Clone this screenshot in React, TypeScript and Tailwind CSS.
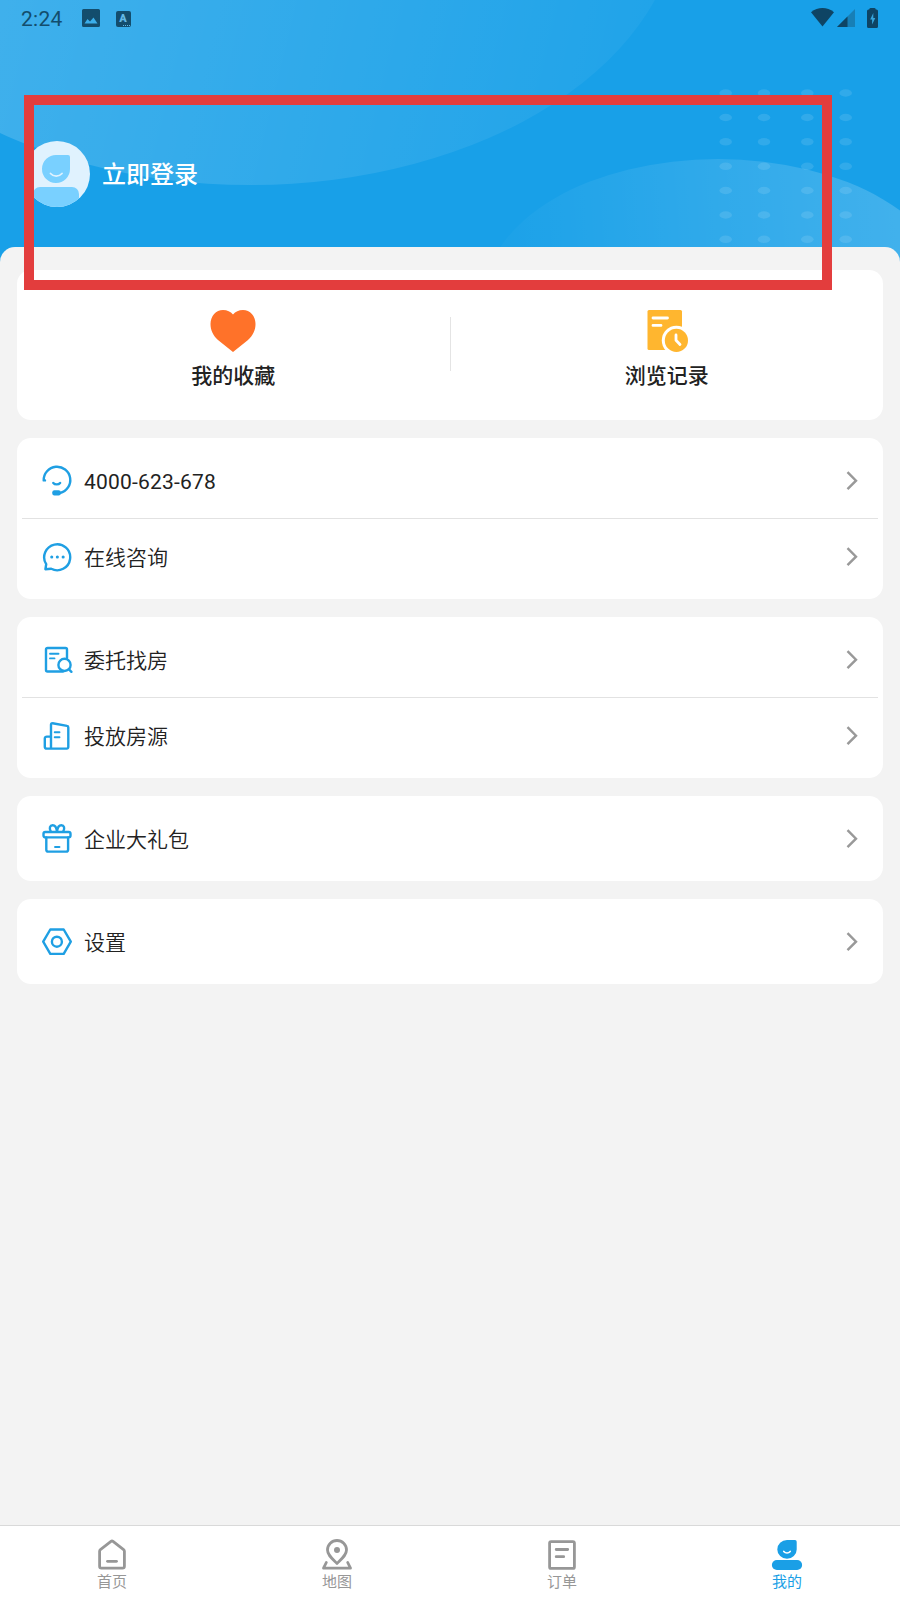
import React from "react";
import { clsx } from "clsx";

interface MenuItem {
  label: string;
  icon: React.ReactNode;
  isPhone?: boolean;
}

interface TabItem {
  label: string;
  icon: React.ReactNode;
  active?: boolean;
}

function LineIcon({ children }: { children: React.ReactNode }) {
  return (
    <svg
      viewBox="0 0 32 32"
      className="w-8 h-8 shrink-0"
      fill="none"
      stroke="#1f9fe3"
      strokeWidth="2.4"
      strokeLinecap="round"
      strokeLinejoin="round"
    >
      {children}
    </svg>
  );
}

function TabIcon({ children }: { children: React.ReactNode }) {
  return (
    <svg
      viewBox="0 0 32 32"
      className="w-8 h-8"
      fill="none"
      stroke="currentColor"
      strokeWidth="2.8"
      strokeLinecap="round"
      strokeLinejoin="round"
    >
      {children}
    </svg>
  );
}

const menuGroups: MenuItem[][] = [
  [
    {
      label: "4000-623-678",
      isPhone: true,
      icon: (
        <LineIcon>
          <path d="M4 15.400H2.700A13.300 13.300 0 1 1 19 28" />
          <path d="M12.300 17.900c1.600 2 5.200 2 6.800 0" />
          <rect x="11.300" y="25.200" width="8.400" height="5.200" rx="2" fill="#1f9fe3" stroke="none" />
        </LineIcon>
      ),
    },
    {
      label: "在线咨询",
      icon: (
        <LineIcon>
          <path d="M5.200 23.200A13 13 0 1 1 10.200 27.800L4.400 28.200Z" />
          <path d="M10.700 15.900h.1M16.300 15.900h.1M22.100 15.900h.1" strokeWidth="3" />
        </LineIcon>
      ),
    },
  ],
  [
    {
      label: "委托找房",
      icon: (
        <LineIcon>
          <path d="M26 14V5.500A1.500 1.500 0 0 0 24.500 4h-18A1.500 1.500 0 0 0 5 5.500V26a1.500 1.500 0 0 0 1.500 1.500H22" />
          <path d="M9 9.800h8.500M9 14.400h4.500" strokeWidth="1.900" />
          <circle cx="23.500" cy="20.900" r="6.100" />
          <path d="M28 25.400l2.400 2.400" />
        </LineIcon>
      ),
    },
    {
      label: "投放房源",
      icon: (
        <LineIcon>
          <path d="M10 28.600V4.600a1.300 1.300 0 0 1 1.600-1.300L26 5.900a1.500 1.500 0 0 1 1.300 1.500V27.100a1.500 1.500 0 0 1-1.500 1.500H5.700a1.900 1.900 0 0 1-1.900-1.900V18.600a2 2 0 0 1 2-2H10" />
          <path d="M13.700 12.300h4.800M13.700 17.300h4.800" strokeWidth="1.900" />
        </LineIcon>
      ),
    },
  ],
  [
    {
      label: "企业大礼包",
      icon: (
        <LineIcon>
          <rect x="2.500" y="9" width="27" height="5.400" rx="1.800" />
          <path d="M5.300 14.400V26.700a1.900 1.900 0 0 0 1.900 1.900h18a1.900 1.900 0 0 0 1.900-1.900V14.400" />
          <path d="M9.800 8.700C7.800 5.200 9 2.300 11.600 2.300C14.500 2.300 15.600 5.200 16 8.700C16.400 5.200 17.500 2.300 20.400 2.300C23 2.300 24.200 5.200 22.200 8.700" />
          <path d="M14 24h4.500" strokeWidth="1.900" />
        </LineIcon>
      ),
    },
  ],
  [
    {
      label: "设置",
      icon: (
        <LineIcon>
          <path d="M9.300 3.500h13.400l7.100 12.200-7.100 12.200H9.300L2.200 15.700Z" />
          <circle cx="15.900" cy="15.700" r="5" />
        </LineIcon>
      ),
    },
  ],
];

const tabs: TabItem[] = [
  {
    label: "首页",
    icon: (
      <TabIcon>
        <path d="M3.600 13.200a2 2 0 0 1 .8-1.600L15 3.400a1.600 1.600 0 0 1 2 0l10.600 8.200a2 2 0 0 1 .8 1.600v15a1.900 1.900 0 0 1-1.900 1.900h-21a1.900 1.900 0 0 1-1.900-1.900Z" />
        <path d="M11.500 23.300h9" />
      </TabIcon>
    ),
  },
  {
    label: "地图",
    icon: (
      <TabIcon>
        <path d="M16 25.400C11 20.500 6.500 17 6.500 12a9.500 9.500 0 0 1 19 0C25.500 17 21 20.500 16 25.400Z" />
        <circle cx="16" cy="12" r="3" fill="currentColor" stroke="none" />
        <path d="M5.300 24.500L2.500 30.200H29.500L26.700 24.500" />
      </TabIcon>
    ),
  },
  {
    label: "订单",
    icon: (
      <TabIcon>
        <rect x="3.600" y="3.600" width="24.800" height="26.800" rx="1.500" />
        <path d="M10.200 11.500h11.500M10.200 18.700h7.500" />
      </TabIcon>
    ),
  },
  {
    label: "我的",
    active: true,
    icon: (
      <TabIcon>
        <path
          d="M16 2H24a1.700 1.700 0 0 1 1.700 1.700V11.400A9.700 9.400 0 1 1 16 2Z"
          fill="currentColor"
          stroke="none"
        />
        <path d="M12.800 13.500c1.700 2 4.700 2 6.400 0" stroke="white" strokeWidth="1.700" />
        <rect x="0.900" y="22" width="30.200" height="10" rx="5" fill="currentColor" stroke="none" />
      </TabIcon>
    ),
  },
];

const dotColumns = [725.7, 764, 807.3, 845.7];
const dotRows = [93, 117.5, 141.8, 166.3, 190.5, 215, 239.3];

function HeaderArt() {
  return (
    <svg className="absolute inset-0 w-full h-full" viewBox="0 0 900 264">
      <defs>
        <linearGradient id="glowLeft" gradientUnits="userSpaceOnUse" x1="0" y1="0" x2="660" y2="160">
          <stop offset="0" stopColor="#fff" stopOpacity="0.17" />
          <stop offset="1" stopColor="#fff" stopOpacity="0.03" />
        </linearGradient>
        <linearGradient id="glowRight" gradientUnits="userSpaceOnUse" x1="510" y1="240" x2="900" y2="210">
          <stop offset="0" stopColor="#fff" stopOpacity="0.02" />
          <stop offset="1" stopColor="#fff" stopOpacity="0.18" />
        </linearGradient>
      </defs>
      <ellipse cx="250" cy="-94" rx="430" ry="279" fill="url(#glowLeft)" />
      <ellipse cx="718" cy="296" rx="233" ry="137" fill="url(#glowRight)" />
      {dotRows.map((y) =>
        dotColumns.map((x) => (
          <ellipse key={`${x}-${y}`} cx={x} cy={y} rx="6.300" ry="3.700" fill="#fff" fillOpacity="0.11" />
        ))
      )}
    </svg>
  );
}

function StatusBar() {
  return (
    <div className="relative flex h-9 items-center pl-[21px] pr-[22px] text-[#134d6d]">
      <span className="mt-[3px] w-[60.5px] font-[Roboto] text-[21px] font-[450] leading-none tracking-[0.3px]">2:24</span>
      <svg viewBox="0 0 18 18" className="w-[18px] h-[18px]">
        <path
          fill="currentColor"
          fillRule="evenodd"
          d="M1.500 0h15A1.500 1.500 0 0 1 18 1.500v15a1.500 1.500 0 0 1-1.500 1.500h-15A1.500 1.500 0 0 1 0 16.500v-15A1.500 1.500 0 0 1 1.500 0ZM2.500 14.500h13L11.500 8.500 8 12.500 5.500 10Z"
        />
      </svg>
      <span className="relative ml-4 mt-px flex h-4 w-[15px] items-center justify-center rounded-[2px] bg-[#134d6d] font-[Roboto] text-[11px] font-black leading-none text-[#63b9e6]">
        A
        <span className="absolute bottom-px right-px w-[7px] border-b border-dotted border-[#63b9e6]" />
      </span>
      <div className="-mt-px ml-auto flex items-center">
        <svg viewBox="0 0 23 19" className="w-[23px] h-[19px]">
          <path d="M0 4.200C7 -1.400 16 -1.400 23 4.200L11.500 18.500Z" fill="#0e4464" />
        </svg>
        <svg viewBox="0 0 18 18" className="ml-[3px] w-[18px] h-[18px]">
          <path d="M18 0V18H0Z" fill="#177fb6" />
          <path d="M10.500 7.500V18H0Z" fill="#0e4464" />
        </svg>
        <svg viewBox="0 0 11 20" className="ml-3 w-[11px] h-5">
          <path d="M3.500 0h4a1.500 1.500 0 0 1 1.300 1.500h.7A1.500 1.500 0 0 1 11 3v15.500A1.500 1.500 0 0 1 9.500 20h-8A1.500 1.500 0 0 1 0 18.500V3a1.500 1.500 0 0 1 1.500-1.500h.7A1.500 1.500 0 0 1 3.500 0Z" fill="#0e4464" />
          <path d="M6.300 5L3.200 11.500h1.900v5l3.200-6.500H6.300Z" fill="#36a5dd" />
        </svg>
      </div>
    </div>
  );
}

function Avatar() {
  return (
    <svg viewBox="0 0 66 66" className="w-[66px] h-[66px]">
      <defs>
        <clipPath id="avatarClip">
          <circle cx="33" cy="33" r="33" />
        </clipPath>
      </defs>
      <g clipPath="url(#avatarClip)">
        <rect width="66" height="66" fill="#e0f2fe" />
        <path d="M32.500 14H44a2 2 0 0 1 2 2v12a14 14 0 1 1-13.500-14Z" fill="#79d0ff" />
        <path d="M26.500 32.500c3 3.400 8.500 3.400 11.500 0" fill="none" stroke="#e0f2fe" strokeWidth="1.800" strokeLinecap="round" />
        <path d="M9 66V53a7 7 0 0 1 7-7h32a7 7 0 0 1 7 7v13Z" fill="#79d0ff" />
      </g>
    </svg>
  );
}

function HeartIcon() {
  return (
    <svg viewBox="0 0 46 42" className="w-[46px] h-[42px]">
      <path
        d="M23 42L8 30C3 25.500.5 20 .5 14C.5 6 6 0 13 0C17.300 0 20.500 1.500 23 4.500C25.500 1.500 28.700 0 33 0C40 0 45.500 6 45.500 14C45.500 20 43 25.500 38 30Z"
        fill="#ff7229"
      />
    </svg>
  );
}

function HistoryIcon() {
  return (
    <svg viewBox="0 0 42 42" className="ml-[3px] w-[42px] h-[42px]" fill="none" strokeLinecap="round">
      <rect x="0.500" y="0" width="34.500" height="40" rx="1.500" fill="#ffb62f" />
      <path d="M6 8h14.500M6 15.400h8" stroke="white" strokeWidth="2.800" />
      <circle cx="29.400" cy="30.400" r="14.600" fill="white" />
      <circle cx="29.400" cy="30.400" r="11.600" fill="#ffb62f" />
      <path d="M29 25v5.300l4 4.200" stroke="white" strokeWidth="2.800" strokeLinejoin="round" />
    </svg>
  );
}

function MenuRow({ item }: { item: MenuItem }) {
  return (
    <button className="flex h-[76px] w-full items-center pl-6 pr-[25px] text-left">
      {item.icon}
      <span
        className={clsx(
          "ml-[11px] mt-1 text-[21px] leading-none text-[#222]",
          item.isPhone ? "font-normal tracking-[0.2px]" : "font-[350]"
        )}
      >
        {item.label}
      </span>
      <svg viewBox="0 0 12 20" className="ml-auto w-3 h-5" fill="none" stroke="#999" strokeWidth="2.400">
        <path d="M1.500 1.200L10 9.700L1.500 18.200" />
      </svg>
    </button>
  );
}

export default function App() {
  return (
    <div className="relative flex h-[1600px] w-[900px] flex-col overflow-hidden bg-[#f3f3f3] font-[Roboto,'Noto_Sans_CJK_SC',sans-serif]">
      {/* Header */}
      <header className="relative h-[264px] shrink-0 bg-[#18a0e8]">
        <HeaderArt />
        <StatusBar />
        <div className="relative mt-[105px] flex items-center pl-6">
          <Avatar />
          <span className="ml-3 mt-0.5 text-[24px] font-medium leading-none text-white">立即登录</span>
        </div>
      </header>

      {/* Sheet with the cards */}
      <main className="relative -mt-[17px] flex flex-1 flex-col gap-[18px] rounded-t-[15px] bg-[#f3f3f3] px-[17px] pt-[23px]">
        <section className="flex h-[150px] rounded-[14px] bg-white pt-10">
          <div className="flex flex-1 flex-col items-center gap-[14px]">
            <HeartIcon />
            <span className="text-[21px] font-medium leading-none text-[#222]">我的收藏</span>
          </div>
          <div className="mt-[7px] h-[54px] w-px bg-[#e4e4e4]" />
          <div className="flex flex-1 flex-col items-center gap-[14px]">
            <HistoryIcon />
            <span className="text-[21px] font-medium leading-none text-[#222]">浏览记录</span>
          </div>
        </section>

        {menuGroups.map((group, idx) => (
          <section key={idx} className="rounded-[14px] bg-white py-[4.5px]">
            {group.map((item, i) => (
              <div key={item.label}>
                {i > 0 && <div className="mx-[5px] -mt-px h-px bg-[#e2e2e2]" />}
                <MenuRow item={item} />
              </div>
            ))}
          </section>
        ))}
      </main>

      {/* Bottom tabs */}
      <nav className="flex h-[75px] shrink-0 border-t border-[#d9d9d9] bg-white">
        {tabs.map((tab) => (
          <button
            key={tab.label}
            className={clsx(
              "flex flex-1 flex-col items-center pt-3 pr-px",
              tab.active ? "text-[#1a9fe6]" : "text-[#979797]"
            )}
          >
            {tab.icon}
            <span className="mt-[5px] text-[15px] leading-none">{tab.label}</span>
          </button>
        ))}
      </nav>

      {/* Highlight frame over the login area */}
      <div className="pointer-events-none absolute left-[24px] top-[95px] h-[195px] w-[808px] border-[10px] border-[#e33d3d]" />
    </div>
  );
}
